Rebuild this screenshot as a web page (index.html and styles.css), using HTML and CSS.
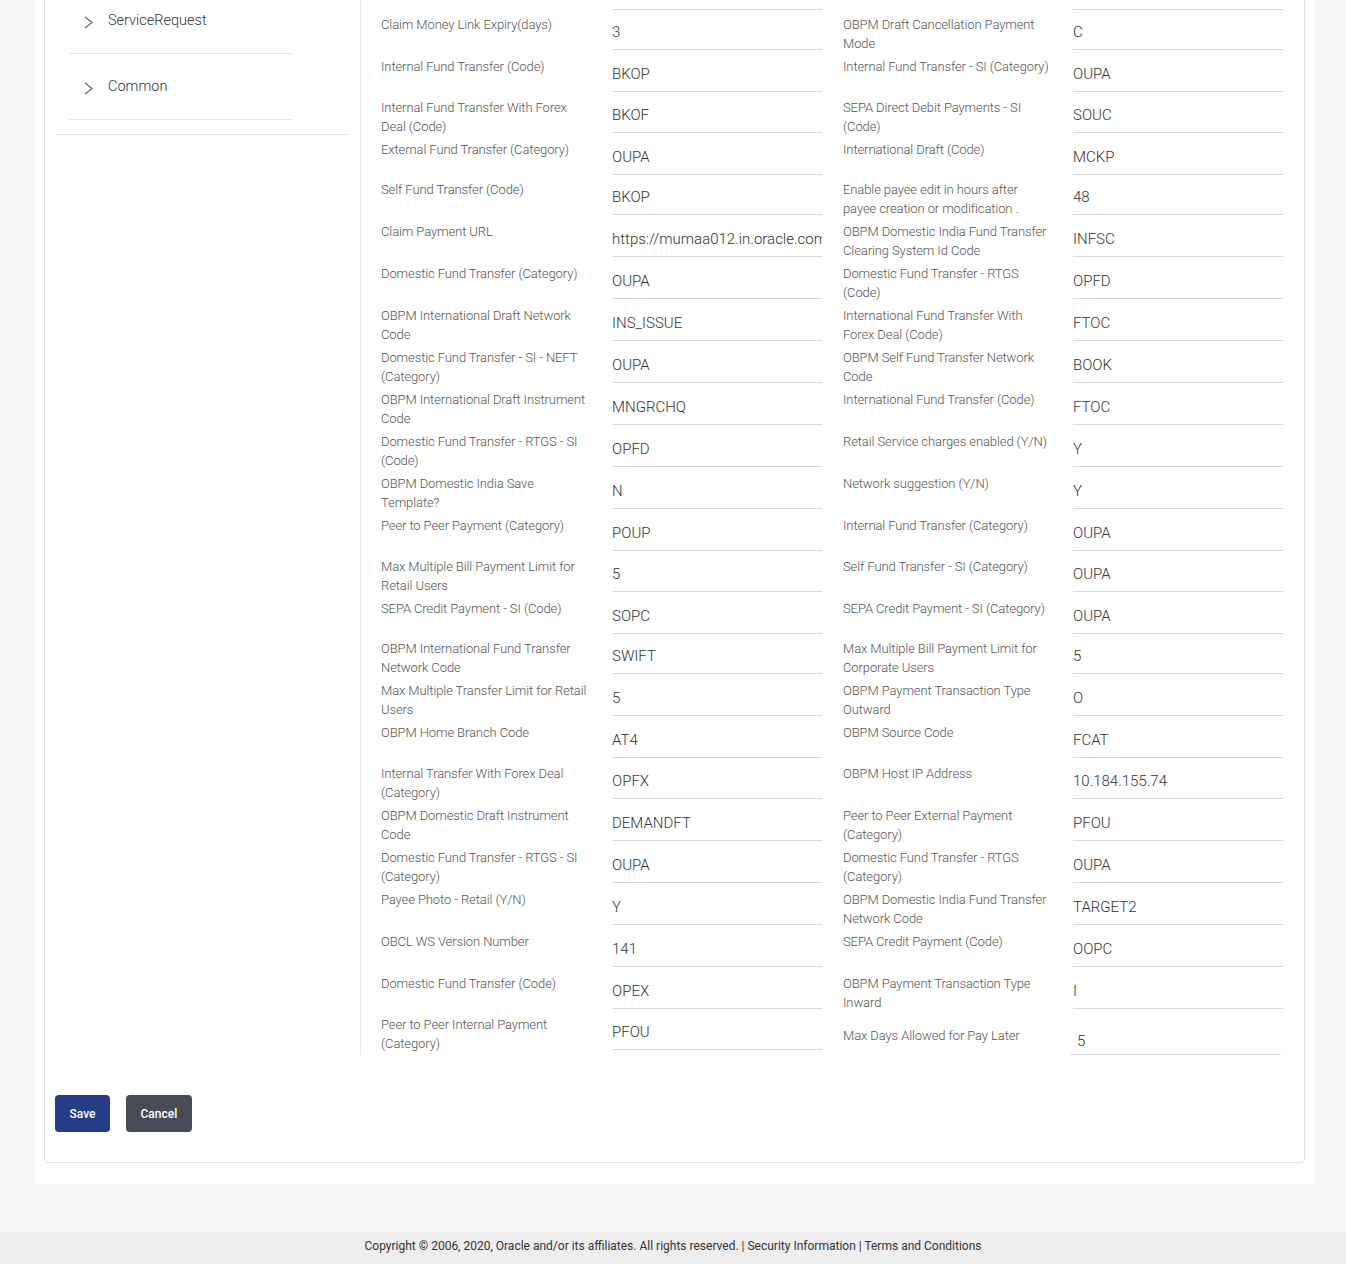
FILE: index.html
```html
<!DOCTYPE html>
<html lang="en">
<head>
<meta charset="utf-8">
<title>System Configuration - Payments</title>
<link rel="stylesheet" href="styles.css">
</head>
<body>
<div class="page">
  <div class="panel">
    <div class="card">
      <div class="layout">
        <aside class="sidebar">
          <ul class="nav">
            <li class="nav-item">
              <svg class="chev" width="9" height="13" viewBox="0 0 9 13"><path d="M1 1 L8 6.5 L1 12" fill="none" stroke="#666" stroke-width="1.2"/></svg>
              <span>ServiceRequest</span>
            </li>
            <li class="nav-item">
              <svg class="chev" width="9" height="13" viewBox="0 0 9 13"><path d="M1 1 L8 6.5 L1 12" fill="none" stroke="#666" stroke-width="1.2"/></svg>
              <span>Common</span>
            </li>
          </ul>
        </aside>
        <section class="form">
          <div class="row ghost"><div class="lbl"></div><div class="val"></div><div class="lbl r"></div><div class="val"></div></div>

          <div class="row h40"><div class="lbl">Claim Money Link Expiry(days)</div><div class="val">3</div><div class="lbl r">OBPM Draft Cancellation Payment<br>Mode</div><div class="val">C</div></div>
          <div class="row"><div class="lbl">Internal Fund Transfer (Code)</div><div class="val">BKOP</div><div class="lbl r">Internal Fund Transfer - SI (Category)</div><div class="val">OUPA</div></div>
          <div class="row h41"><div class="lbl">Internal Fund Transfer With Forex<br>Deal (Code)</div><div class="val">BKOF</div><div class="lbl r">SEPA Direct Debit Payments - SI<br>(Code)</div><div class="val">SOUC</div></div>
          <div class="row"><div class="lbl">External Fund Transfer (Category)</div><div class="val">OUPA</div><div class="lbl r">International Draft (Code)</div><div class="val">MCKP</div></div>
          <div class="row h40"><div class="lbl">Self Fund Transfer (Code)</div><div class="val">BKOP</div><div class="lbl r">Enable payee edit in hours after<br>payee creation or modification .</div><div class="val">48</div></div>
          <div class="row"><div class="lbl">Claim Payment URL</div><div class="val">https://mumaa012.in.oracle.com:18443/claim</div><div class="lbl r">OBPM Domestic India Fund Transfer<br>Clearing System Id Code</div><div class="val">INFSC</div></div>
          <div class="row"><div class="lbl">Domestic Fund Transfer (Category)</div><div class="val">OUPA</div><div class="lbl r">Domestic Fund Transfer - RTGS<br>(Code)</div><div class="val">OPFD</div></div>
          <div class="row"><div class="lbl">OBPM International Draft Network<br>Code</div><div class="val">INS_ISSUE</div><div class="lbl r">International Fund Transfer With<br>Forex Deal (Code)</div><div class="val">FTOC</div></div>
          <div class="row"><div class="lbl">Domestic Fund Transfer - SI - NEFT<br>(Category)</div><div class="val">OUPA</div><div class="lbl r">OBPM Self Fund Transfer Network<br>Code</div><div class="val">BOOK</div></div>
          <div class="row"><div class="lbl">OBPM International Draft Instrument<br>Code</div><div class="val">MNGRCHQ</div><div class="lbl r">International Fund Transfer (Code)</div><div class="val">FTOC</div></div>
          <div class="row"><div class="lbl">Domestic Fund Transfer - RTGS - SI<br>(Code)</div><div class="val">OPFD</div><div class="lbl r">Retail Service charges enabled (Y/N)</div><div class="val">Y</div></div>
          <div class="row"><div class="lbl">OBPM Domestic India Save<br>Template?</div><div class="val">N</div><div class="lbl r">Network suggestion (Y/N)</div><div class="val">Y</div></div>
          <div class="row"><div class="lbl">Peer to Peer Payment (Category)</div><div class="val">POUP</div><div class="lbl r">Internal Fund Transfer (Category)</div><div class="val">OUPA</div></div>
          <div class="row h41"><div class="lbl">Max Multiple Bill Payment Limit for<br>Retail Users</div><div class="val">5</div><div class="lbl r">Self Fund Transfer - SI (Category)</div><div class="val">OUPA</div></div>
          <div class="row"><div class="lbl">SEPA Credit Payment - SI (Code)</div><div class="val">SOPC</div><div class="lbl r">SEPA Credit Payment - SI (Category)</div><div class="val">OUPA</div></div>
          <div class="row h40"><div class="lbl">OBPM International Fund Transfer<br>Network Code</div><div class="val">SWIFT</div><div class="lbl r">Max Multiple Bill Payment Limit for<br>Corporate Users</div><div class="val">5</div></div>
          <div class="row"><div class="lbl">Max Multiple Transfer Limit for Retail<br>Users</div><div class="val">5</div><div class="lbl r">OBPM Payment Transaction Type<br>Outward</div><div class="val">O</div></div>
          <div class="row"><div class="lbl">OBPM Home Branch Code</div><div class="val">AT4</div><div class="lbl r">OBPM Source Code</div><div class="val">FCAT</div></div>
          <div class="row h41"><div class="lbl">Internal Transfer With Forex Deal<br>(Category)</div><div class="val">OPFX</div><div class="lbl r">OBPM Host IP Address</div><div class="val">10.184.155.74</div></div>
          <div class="row"><div class="lbl">OBPM Domestic Draft Instrument<br>Code</div><div class="val">DEMANDFT</div><div class="lbl r">Peer to Peer External Payment<br>(Category)</div><div class="val">PFOU</div></div>
          <div class="row"><div class="lbl">Domestic Fund Transfer - RTGS - SI<br>(Category)</div><div class="val">OUPA</div><div class="lbl r">Domestic Fund Transfer - RTGS<br>(Category)</div><div class="val">OUPA</div></div>
          <div class="row"><div class="lbl">Payee Photo - Retail (Y/N)</div><div class="val">Y</div><div class="lbl r">OBPM Domestic India Fund Transfer<br>Network Code</div><div class="val">TARGET2</div></div>
          <div class="row"><div class="lbl">OBCL WS Version Number</div><div class="val">141</div><div class="lbl r">SEPA Credit Payment (Code)</div><div class="val">OOPC</div></div>
          <div class="row"><div class="lbl">Domestic Fund Transfer (Code)</div><div class="val">OPEX</div><div class="lbl r">OBPM Payment Transaction Type<br>Inward</div><div class="val">I</div></div>
          <div class="row h41"><div class="lbl">Peer to Peer Internal Payment<br>(Category)</div><div class="val">PFOU</div><div class="lbl r late">Max Days Allowed for Pay Later</div><div class="val late">5</div></div>
        </section>
      </div>
      <div class="actions">
        <button class="btn btn-primary" type="button">Save</button>
        <button class="btn btn-secondary" type="button">Cancel</button>
      </div>
    </div>
  </div>
  <footer class="footer">Copyright © 2006, 2020, Oracle and/or its affiliates. All rights reserved. | Security Information | Terms and Conditions</footer>
</div>
</body>
</html>
```
FILE: styles.css
```css
* { box-sizing: border-box; }
html, body { margin: 0; padding: 0; }
body {
  background: #f8f8f8;
  font-family: Roboto, "Noto Sans", "Liberation Sans", sans-serif;
  color: #333;
}
.page { width: 1346px; }
.panel {
  margin: 0 31px 0 35px;
  background: #fff;
  padding: 0 10px 21px 9px;
}
.card {
  border: 1px solid #e3e3e3;
  border-top: 0;
  border-radius: 0 0 4px 4px;
  padding: 0 0 30px 10px;
}
.layout { display: flex; align-items: stretch; }
.sidebar {
  width: 306px;
  padding-right: 10px;
  border-right: 1px solid #e6e6e6;
  flex: none;
}
.nav {
  list-style: none;
  margin: -12px 0 0 0;
  padding: 0 0 14px 0;
  border-bottom: 1px solid #e6e6e6;
}
.nav-item {
  margin-left: 14px;
  width: 223px;
  height: 66px;
  border-bottom: 1px solid #e6e6e6;
  display: flex;
  align-items: center;
  font-size: 14.5px;
  font-weight: 300;
  color: #333;
}
.chev { margin: 4px 15px 0 15px; flex: none; }

.form { padding: 0 0 5px 20px; flex: 1; }
.row {
  --h: 42px;
  display: grid;
  grid-template-columns: 231px 210px 251px 210px;
  grid-template-rows: var(--h);
  height: var(--h);
}
.row.h40 { --h: 40px; }
.row.h41 { --h: 41px; }
.row.ghost { --h: 10px; }
.row.ghost .lbl { padding: 0; }
.lbl {
  padding-top: calc(var(--h) - 35px);
  font-size: 13px;
  line-height: 19px;
  font-weight: 300;
  letter-spacing: -0.1px;
  color: #555;
  white-space: nowrap;
}
.lbl.r { padding-left: 21px; }
.lbl.late { padding-top: 17px; }
.val {
  border-bottom: 1px solid #d9d9d9;
  display: flex;
  align-items: flex-end;
  padding-bottom: 7.5px;
  font-size: 15px;
  line-height: 20px;
  font-weight: 300;
  color: #333;
  white-space: nowrap;
  overflow: hidden;
}
.val.late {
  margin: 0 0 -5px -3px;
  width: 211px;
  padding-left: 7px;
  padding-bottom: 3px;
}

.actions { display: flex; gap: 16px; margin-top: 40px; }
.btn {
  height: 37px;
  padding: 0 14.5px;
  border: 0;
  border-radius: 4px;
  color: #fff;
  font-family: Roboto, "Liberation Sans", sans-serif;
  font-size: 12px;
  font-weight: 500;
}
.btn-primary { background: #253c86; }
.btn-secondary { background: #464b55; }

.footer {
  margin-top: 48px;
  background: #eeeeee;
  padding: 4px 0 8px;
  line-height: 20px;
  font-size: 12px;
  color: #333;
  text-align: center;
}
```
